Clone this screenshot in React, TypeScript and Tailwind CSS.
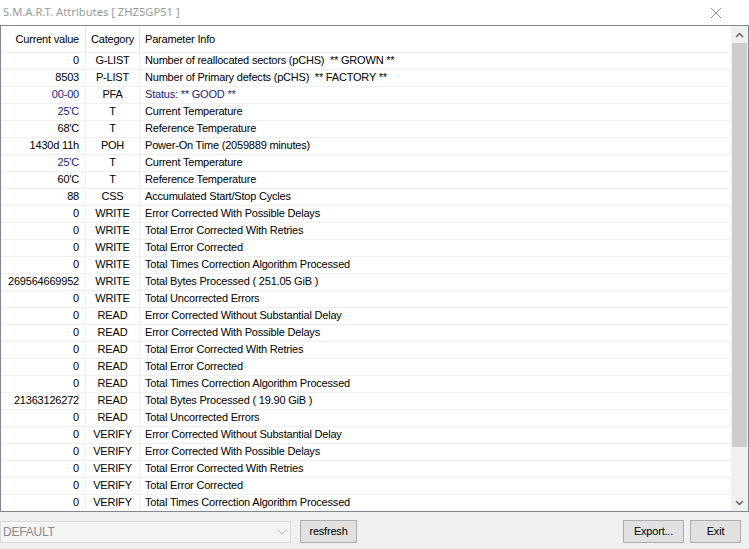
import React from "react";

type Row = { value: string; cat: string; info: string; blue?: boolean };

const rows: Row[] = [
  { value: "0", cat: "G-LIST", info: "Number of reallocated sectors (pCHS)  ** GROWN **" },
  { value: "8503", cat: "P-LIST", info: "Number of Primary defects (pCHS)  ** FACTORY **" },
  { value: "00-00", cat: "PFA", info: "Status: ** GOOD **", blue: true },
  { value: "25'C", cat: "T", info: "Current Temperature", blue: true },
  { value: "68'C", cat: "T", info: "Reference Temperature" },
  { value: "1430d 11h", cat: "POH", info: "Power-On Time (2059889 minutes)" },
  { value: "25'C", cat: "T", info: "Current Temperature", blue: true },
  { value: "60'C", cat: "T", info: "Reference Temperature" },
  { value: "88", cat: "CSS", info: "Accumulated Start/Stop Cycles" },
  { value: "0", cat: "WRITE", info: "Error Corrected With Possible Delays" },
  { value: "0", cat: "WRITE", info: "Total Error Corrected With Retries" },
  { value: "0", cat: "WRITE", info: "Total Error Corrected" },
  { value: "0", cat: "WRITE", info: "Total Times Correction Algorithm Processed" },
  { value: "269564669952", cat: "WRITE", info: "Total Bytes Processed ( 251.05 GiB )" },
  { value: "0", cat: "WRITE", info: "Total Uncorrected Errors" },
  { value: "0", cat: "READ", info: "Error Corrected Without Substantial Delay" },
  { value: "0", cat: "READ", info: "Error Corrected With Possible Delays" },
  { value: "0", cat: "READ", info: "Total Error Corrected With Retries" },
  { value: "0", cat: "READ", info: "Total Error Corrected" },
  { value: "0", cat: "READ", info: "Total Times Correction Algorithm Processed" },
  { value: "21363126272", cat: "READ", info: "Total Bytes Processed ( 19.90 GiB )" },
  { value: "0", cat: "READ", info: "Total Uncorrected Errors" },
  { value: "0", cat: "VERIFY", info: "Error Corrected Without Substantial Delay" },
  { value: "0", cat: "VERIFY", info: "Error Corrected With Possible Delays" },
  { value: "0", cat: "VERIFY", info: "Total Error Corrected With Retries" },
  { value: "0", cat: "VERIFY", info: "Total Error Corrected" },
  { value: "0", cat: "VERIFY", info: "Total Times Correction Algorithm Processed" },
];

const Chevron = ({ up }: { up?: boolean }) => (
  <svg width="9" height="6" viewBox="0 0 9 6" className="block">
    <path
      d={up ? "M1 5 L4.5 1.5 L8 5" : "M1 1 L4.5 4.5 L8 1"}
      fill="none"
      stroke="#606060"
      strokeWidth="1.4"
    />
  </svg>
);

const Button = ({ label, w }: { label: string; w: string }) => (
  <button
    type="button"
    className={`${w} h-[23px] bg-[#e1e1e1] border border-[#adadad] text-[11px] tracking-[-0.2px] text-black leading-none`}
  >
    {label}
  </button>
);

export default function App() {
  return (
    <div
      className="w-[749px] h-[549px] bg-white flex flex-col overflow-hidden text-[11px] tracking-[-0.2px] text-black"
      style={{ fontFamily: '"Liberation Sans", Arial, sans-serif' }}
    >
      {/* Title bar */}
      <div className="h-[25px] flex items-center justify-between pl-[3px] pr-[27px] shrink-0">
        <span
          className="text-[11.2px] tracking-normal text-[#9a9a9a]"
          style={{ fontFamily: '"Noto Sans", "Open Sans", sans-serif' }}
        >
          S.M.A.R.T. Attributes [ ZHZ5GP51 ]
        </span>
        <svg width="12" height="12" viewBox="0 0 12 12">
          <path d="M1 1 L11 11 M11 1 L1 11" stroke="#8a8a8a" strokeWidth="1" />
        </svg>
      </div>

      {/* List */}
      <div className="h-[487px] shrink-0 border border-[#828790] flex">
        <div className="flex-1 flex flex-col">
          <div className="h-[26px] flex items-center shrink-0">
            <div className="w-[85px] h-full flex items-center justify-end pr-[6px] border-r border-[#e5e5e5]">
              Current value
            </div>
            <div className="w-[54px] h-full flex items-center justify-center border-r border-[#e5e5e5]">
              Category
            </div>
            <div className="flex-1 pl-[5px]">Parameter Info</div>
          </div>
          {rows.map((r, i) => (
            <div
              key={i}
              className="h-[17px] flex items-center border-t border-[#f0f0f0] leading-none pb-px"
            >
              <div
                className={`w-[85px] h-full flex items-center justify-end pr-[6px] border-r border-[#f0f0f0] ${
                  r.blue ? "text-[#1c1c84]" : ""
                }`}
              >
                {r.value}
              </div>
              <div className="w-[54px] h-full flex items-center justify-center border-r border-[#f0f0f0]">
                {r.cat}
              </div>
              <div
                className={`flex-1 pl-[5px] whitespace-pre ${
                  r.blue && r.cat === "PFA" ? "text-[#1c1c84]" : ""
                }`}
              >
                {r.info}
              </div>
            </div>
          ))}
        </div>

        {/* Scrollbar */}
        <div className="w-[17px] bg-[#f0f0f0] flex flex-col shrink-0">
          <div className="h-[17px] flex items-center justify-center">
            <Chevron up />
          </div>
          <div className="h-[404px] mx-[1px] bg-[#cdcdcd]" />
          <div className="flex-1" />
          <div className="h-[17px] flex items-center justify-center">
            <Chevron />
          </div>
        </div>
      </div>

      {/* Bottom bar */}
      <div className="flex-1 bg-[#f0f0f0] flex items-center pt-[2px]">
        <div className="w-[291px] h-[22px] bg-[#f4f4f4] border border-[#d9d9d9] flex items-center justify-between pl-[2px] pr-[3px]">
          <span className="text-[12px] text-[#8a8a8a]">DEFAULT</span>
          <svg width="10" height="6" viewBox="0 0 10 6">
            <path d="M1 1 L5 5 L9 1" fill="none" stroke="#b0b0b0" strokeWidth="1" />
          </svg>
        </div>
        <div className="ml-[9px]">
          <Button label="resfresh" w="w-[57px]" />
        </div>
        <div className="ml-auto flex gap-[6px] pr-[8px]">
          <Button label="Export..." w="w-[61px]" />
          <Button label="Exit" w="w-[51px]" />
        </div>
      </div>
    </div>
  );
}
